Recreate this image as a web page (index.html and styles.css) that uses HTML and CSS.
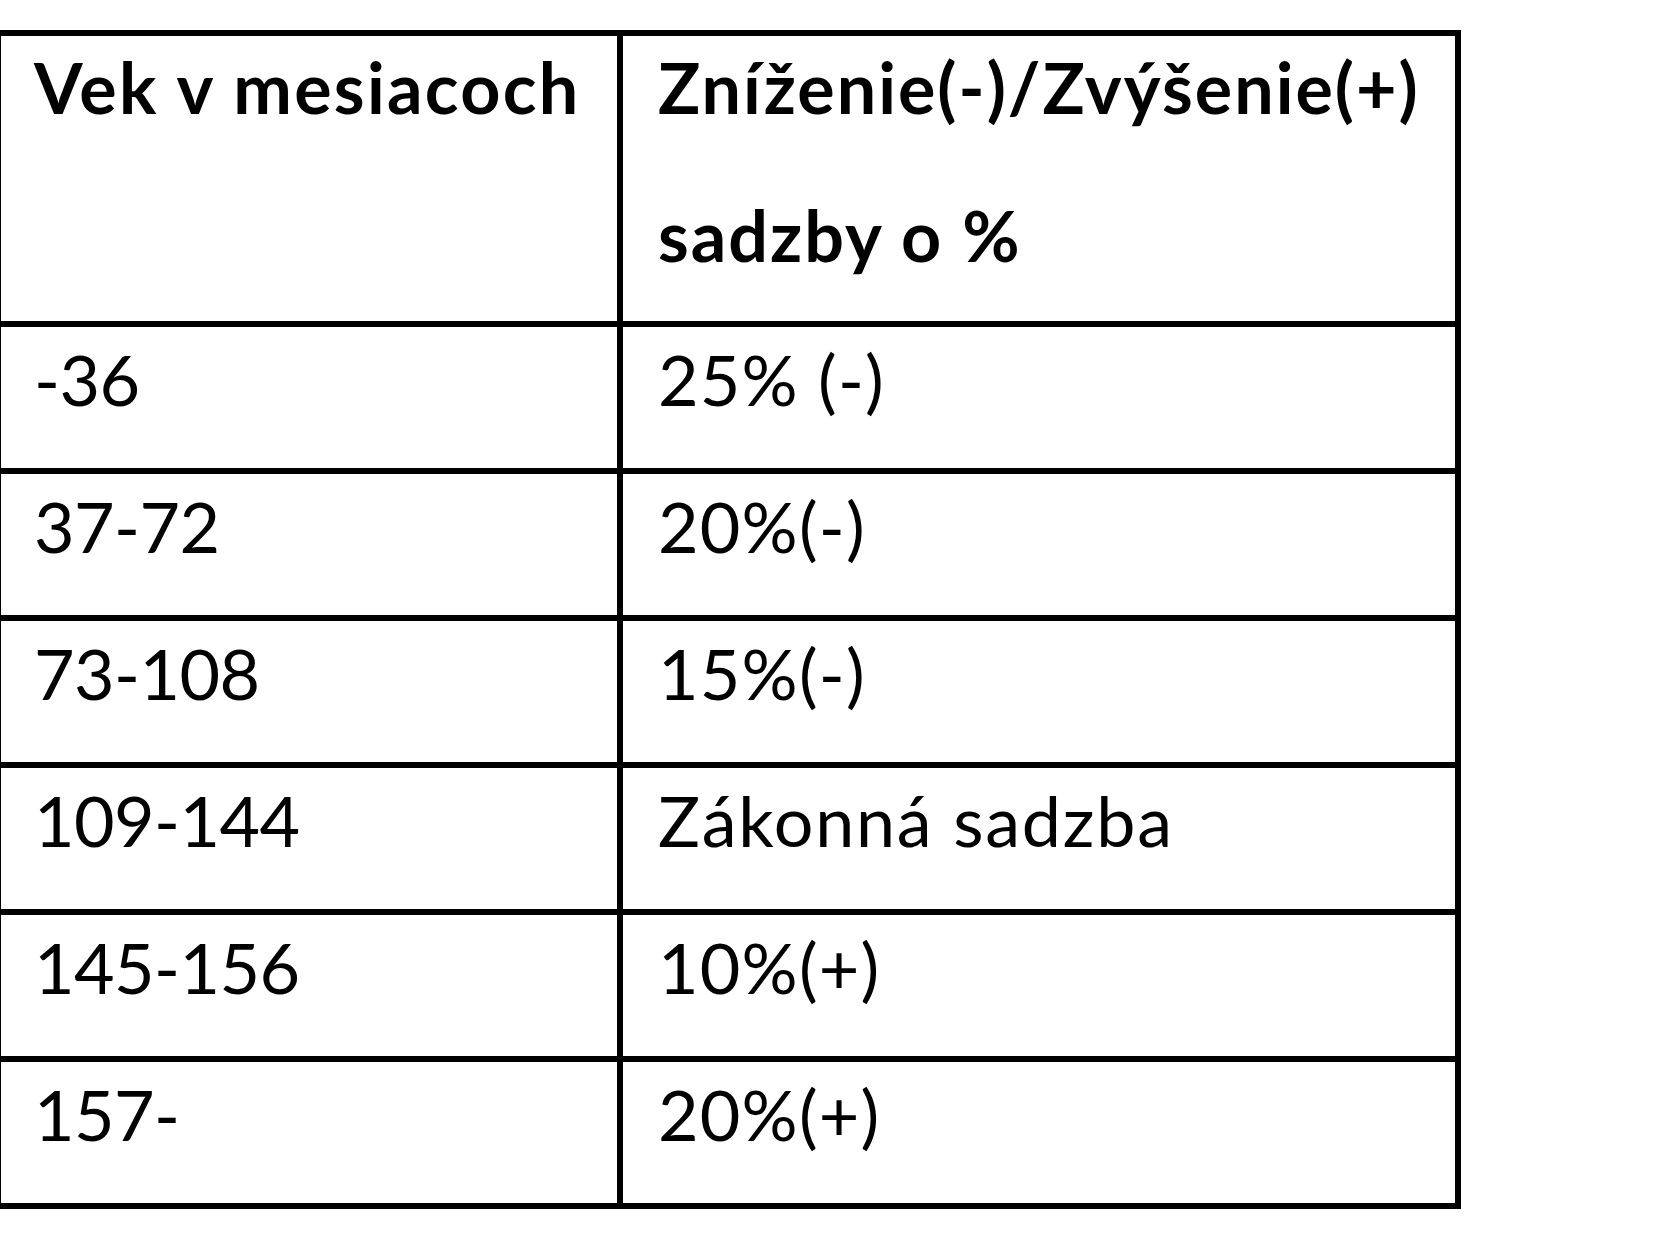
FILE: index.html
```html
<!DOCTYPE html>
<html lang="sk">
<head>
<meta charset="utf-8">
<title>Sadzby podľa veku vozidla</title>
<link rel="stylesheet" href="styles.css">
</head>
<body>
<table class="rates">
  <thead>
    <tr class="head-row">
      <th class="c1"><div class="head-text">Vek v mesiacoch</div></th>
      <th class="c2"><div class="head-text">Zníženie(-)/Zvýšenie(+)<br>sadzby o %</div></th>
    </tr>
  </thead>
  <tbody>
    <tr><td class="c1">-36</td><td class="c2">25% (-)</td></tr>
    <tr><td class="c1">37-72</td><td class="c2">20%(-)</td></tr>
    <tr><td class="c1">73-108</td><td class="c2">15%(-)</td></tr>
    <tr><td class="c1">109-144</td><td class="c2 word">Zákonná sadzba</td></tr>
    <tr><td class="c1">145-156</td><td class="c2">10%(+)</td></tr>
    <tr><td class="c1">157-</td><td class="c2">20%(+)</td></tr>
  </tbody>
</table>
</body>
</html>
```

FILE: styles.css
```css
html, body {
  margin: 0;
  padding: 0;
  background: #ffffff;
}

body {
  font-family: "Lato", "Open Sans", sans-serif;
  color: #000000;
}

.rates {
  border-collapse: separate;
  border-spacing: 0;
  table-layout: fixed;
  margin: 30px 0 0 -5px;
  border-top: 6px solid #000;
  border-left: 6px solid #000;
}

.rates th,
.rates td {
  box-sizing: border-box;
  border-right: 6px solid #000;
  border-bottom: 6px solid #000;
  vertical-align: top;
  text-align: left;
  padding: 0;
  font-size: 70px;
  white-space: nowrap;
}

.rates .c1 {
  width: 622px;
  padding-left: 33px;
}

.rates .c2 {
  width: 838px;
  padding-left: 35px;
  letter-spacing: 1.2px;
}

.rates td.c1 {
  letter-spacing: -0.6px;
}

.head-row th {
  height: 291px;
  font-weight: 700;
  line-height: 148px;
}

.rates .head-row th.c1 {
  letter-spacing: 2.3px;
}

.rates .head-row th.c2 {
  letter-spacing: 2px;
}

.head-text {
  margin-top: -23px;
}

.rates td {
  height: 147px;
  font-weight: 400;
  line-height: 104px;
}

.rates td.word {
  letter-spacing: 1.8px;
}
```
